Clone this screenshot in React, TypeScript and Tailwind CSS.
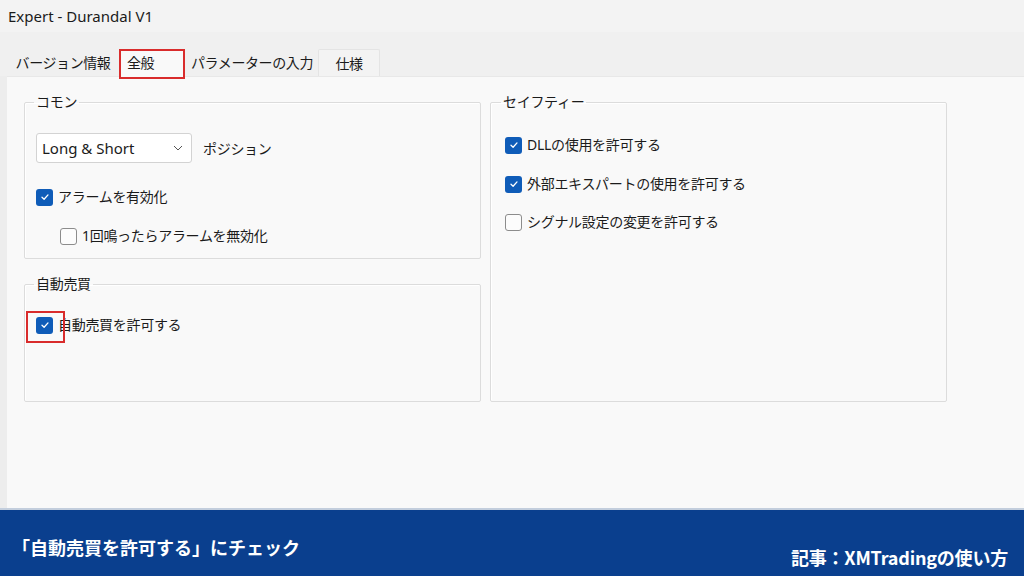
import React from 'react';

const font = { fontFamily: '"Noto Sans", "Noto Sans CJK JP", sans-serif' };

function Check({ checked }: { checked: boolean }) {
  if (checked) {
    return (
      <span className="flex h-[17px] w-[17px] shrink-0 items-center justify-center rounded-[3px] bg-[#0f5cb8]">
        <svg width="10" height="10" viewBox="0 0 10 10" fill="none">
          <path d="M2 5.2 4.1 7.2 8 2.9" stroke="white" strokeWidth="1.3" strokeLinecap="round" strokeLinejoin="round" />
        </svg>
      </span>
    );
  }
  return <span className="h-[17px] w-[17px] shrink-0 rounded-[3px] border border-[#8c8c8c] bg-[#fcfcfc]" />;
}

function CheckRow({ checked, label, className = '' }: { checked: boolean; label: string; className?: string }) {
  return (
    <div className={`flex h-[20px] items-center gap-[5px] ${className}`}>
      <Check checked={checked} />
      <span className="whitespace-nowrap text-[14px] leading-[20px] tracking-[-0.3px] text-[#1b1b1b]">{label}</span>
    </div>
  );
}

function Group({ title, className = '', children }: { title: string; className?: string; children: React.ReactNode }) {
  return (
    <fieldset className={`rounded-[2px] border border-[#dcdcdc] pl-[11px] shadow-[inset_1px_1px_0_#ffffff] ${className}`}>
      <legend className="-ml-[2px] px-[2px] text-[14px] leading-[20px] tracking-[-0.3px] text-[#1b1b1b]">{title}</legend>
      {children}
    </fieldset>
  );
}

const tabText = 'whitespace-nowrap text-[14px] tracking-[-0.4px] text-[#1b1b1b]';

export default function App() {
  return (
    <div className="flex h-[576px] w-[1024px] flex-col overflow-hidden bg-[#f0f0f0]" style={font}>
      <div className="flex h-[32px] items-center bg-[#f3f3f3] px-2 text-[15px] text-[#1b1b1b]">Expert - Durandal V1</div>

      <div className="flex h-[44px] items-end bg-[#f0f0f0] pl-[10px]">
        <div className={`flex h-[27px] w-[106px] items-center justify-center ${tabText}`}>バージョン情報</div>
        <div className={`relative z-10 mb-[-3px] ml-[3px] flex h-[30px] w-[66px] items-start border-2 border-[#d92c2c] bg-[#f9f9f9] pl-[6px] pt-[1px] ${tabText}`}>全般</div>
        <div className={`ml-[3px] flex h-[27px] w-[128px] items-center justify-center ${tabText}`}>パラメーターの入力</div>
        <div className={`ml-[2px] flex h-[27px] w-[62px] items-center justify-center rounded-t-[2px] border border-b-0 border-[#e4e4e4] bg-[#f3f3f3] ${tabText}`}>仕様</div>
      </div>

      <div className="flex flex-1">
        <div className="w-[7px] bg-[#ededed]" />
        <div className="relative flex flex-1 gap-[9px] border-t border-[#e8e8e8] bg-[#f9f9f9] pl-[17px] pt-[15px]">
          <div className="flex w-[457px] flex-col">
            <Group title="コモン" className="h-[167px]">
              <div className="mt-[21px] flex items-center">
                <div className="flex h-[30px] w-[156px] items-center justify-between rounded-[3px] border border-[#d3d3d3] bg-white pl-[5px] pr-[8px] text-[15px] text-[#1b1b1b]">
                  <span>Long &amp; Short</span>
                  <svg width="10" height="6" viewBox="0 0 10 6" fill="none">
                    <path d="M1 1 5 5 9 1" stroke="#555" strokeWidth="1" />
                  </svg>
                </div>
                <span className="ml-[11px] text-[14px] tracking-[-0.3px] text-[#1b1b1b]">ポジション</span>
              </div>
              <CheckRow checked label="アラームを有効化" className="mt-[24px]" />
              <CheckRow checked={false} label="1回鳴ったらアラームを無効化" className="ml-[24px] mt-[19px]" />
            </Group>

            <Group title="自動売買" className="mt-[15px] h-[128px]">
              <CheckRow checked label="自動売買を許可する" className="mt-[21px]" />
            </Group>
          </div>

          <Group title="セイフティー" className="h-[310px] w-[457px] pl-[12px]">
            <CheckRow checked label="DLLの使用を許可する" className="ml-[2px] mt-[23px]" />
            <CheckRow checked label="外部エキスパートの使用を許可する" className="ml-[2px] mt-[19px]" />
            <CheckRow checked={false} label="シグナル設定の変更を許可する" className="ml-[2px] mt-[18px]" />
          </Group>

          <div className="absolute left-[19px] top-[234px] h-[32px] w-[39px] border-2 border-[#d92c2c]" />
        </div>
      </div>

      <div className="h-[2px] bg-[#c3cedd]" />
      <div className="flex h-[66px] items-start justify-between bg-[#0a3f8e] px-[12px] text-white" style={{ fontFamily: '"Noto Sans CJK JP", sans-serif' }}>
        <span className="mt-[25px] text-[18px] font-bold leading-[24px]">「自動売買を許可する」にチェック</span>
        <span className="mt-[35px] pr-[4px] text-[18px] font-bold leading-[24px] tracking-[-0.2px]">記事：XMTradingの使い方</span>
      </div>
    </div>
  );
}
